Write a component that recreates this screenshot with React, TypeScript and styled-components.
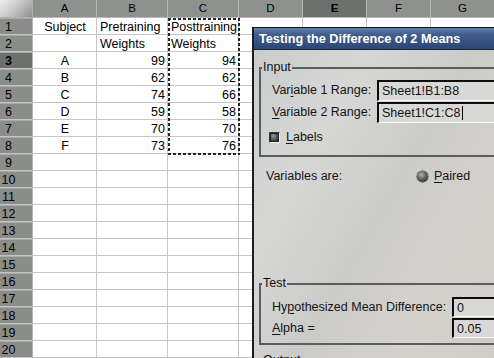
import React from 'react';
import styled, { createGlobalStyle } from 'styled-components';

const Global = createGlobalStyle`
  html, body { margin: 0; padding: 0; background: #fff; }
  body { font-family: "Liberation Sans", Arial, sans-serif; }
`;

const Page = styled.div`
  position: relative;
  width: 494px;
  height: 358px;
  overflow: hidden;
  background: #fff;
  font-family: "Liberation Sans", Arial, sans-serif;
  color: #000;
`;

const Sheet = styled.div`
  display: grid;
  grid-template-columns: 33px 64px 71px 71px 64px 64px 64px 64px;
  grid-template-rows: 18px repeat(20, 17px);
`;

const Corner = styled.div`
  grid-row: 1;
  grid-column: 1;
  background: linear-gradient(135deg, #efefef 0%, #cfcfcf 40%, #8f8f8f 100%);
  border-right: 1px solid #b0b0b0;
  border-bottom: 1px solid #b0b0b0;
`;

const ColHead = styled.div<{ $c: number; $active?: boolean }>`
  grid-row: 1;
  grid-column: ${p => p.$c};
  display: flex;
  align-items: center;
  justify-content: center;
  box-sizing: border-box;
  padding-bottom: 1px;
  background: ${p => (p.$active ? '#6e706e' : '#8f918f')};
  border-right: 1px solid #b8b8b8;
  border-bottom: 1px solid #b8b8b8;
  font-size: 11.5px;
  font-weight: ${p => (p.$active ? 700 : 400)};
`;

const RowHead = styled.div<{ $r: number; $active?: boolean }>`
  grid-row: ${p => p.$r};
  grid-column: 1;
  display: flex;
  align-items: center;
  justify-content: center;
  box-sizing: border-box;
  padding-right: 15px;
  padding-top: 1px;
  background: ${p => (p.$active ? '#6e706e' : '#8b8d8b')};
  border-right: 1px solid #b4b4b4;
  border-bottom: 1px solid #c4c4c4;
  box-shadow: inset 0 1px 0 #a9aba9;
  font-size: 12.5px;
  font-weight: ${p => (p.$active ? 700 : 400)};
`;

const Cell = styled.div<{ $r: number; $c: number; $align: 'left' | 'center' | 'right' }>`
  grid-row: ${p => p.$r};
  grid-column: ${p => p.$c};
  display: flex;
  align-items: center;
  justify-content: ${p => (p.$align === 'left' ? 'flex-start' : p.$align === 'right' ? 'flex-end' : 'center')};
  box-sizing: border-box;
  padding: 1px 2px 0 3px;
  border-right: 1px solid #c6c6c6;
  border-bottom: 1px solid #c6c6c6;
  font-size: 12.5px;
  white-space: nowrap;
  overflow: hidden;
`;

const CopyMarquee = styled.div`
  grid-row: 2 / 10;
  grid-column: 4;
  margin: 0 -1px -1px 0;
  pointer-events: none;
  z-index: 1;
  background:
    repeating-linear-gradient(90deg, #262626 0 3px, transparent 3px 5px) top left / 100% 2px no-repeat,
    repeating-linear-gradient(90deg, #262626 0 3px, transparent 3px 5px) bottom left / 100% 2px no-repeat,
    repeating-linear-gradient(180deg, #262626 0 3px, transparent 3px 5px) top left / 2px 100% no-repeat,
    repeating-linear-gradient(180deg, #262626 0 3px, transparent 3px 5px) top right / 2px 100% no-repeat;
`;

/* Dialog */

const Dialog = styled.div`
  position: absolute;
  left: 252px;
  top: 27px;
  width: 330px;
  height: 360px;
  box-sizing: border-box;
  border-top: 1px solid #141414;
  border-left: 2px solid #1c1c1c;
  display: flex;
  flex-direction: column;
  z-index: 2;
`;

const TitleBar = styled.div`
  height: 21px;
  flex: none;
  display: flex;
  align-items: center;
  padding-left: 5px;
  background: linear-gradient(180deg, #6281ad 0%, #415e8e 30%, #34507f 70%, #2d4775 100%);
  border-bottom: 1px solid #17233a;
  color: #fff;
  font-size: 12.7px;
  font-weight: 700;
  white-space: nowrap;
`;

const Body = styled.div`
  flex: 1;
  padding: 0 0 0 5px;
  background: linear-gradient(120deg, #c9cccd 0%, #d7d7d5 22%, #cbcbc9 42%, #d5d2ce 62%, #cac7c3 100%);
  font-size: 12.5px;
  color: #141414;
`;

const Frame = styled.fieldset<{ $mt: number; $pt: number; $pb: number }>`
  margin: ${p => p.$mt}px 0 0 0;
  padding: ${p => p.$pt}px 0 ${p => p.$pb}px 0;
  border: 2px solid #585d5d;
  min-width: 0;
`;

const Legend = styled.legend`
  padding: 0 1px;
  margin-left: 1px;
  font-size: 12.5px;
  line-height: 15px;
  color: #111;
`;

const FieldRow = styled.div<{ $label: number; $h: number }>`
  display: grid;
  grid-template-columns: ${p => p.$label}px 1fr;
  align-items: center;
  height: ${p => p.$h}px;
  padding-left: 11px;
  & + & {
    margin-top: 1px;
  }
`;

const Label = styled.span`
  white-space: nowrap;
  line-height: 15px;
`;

const Mn = styled.span`
  text-decoration: underline;
  text-underline-offset: 2px;
  text-decoration-thickness: 1px;
`;

const Field = styled.div`
  height: 100%;
  box-sizing: border-box;
  display: flex;
  align-items: center;
  padding-left: 3px;
  background: #d8d8d6;
  border-top: 2px solid #0c0c0c;
  border-left: 2px solid #0c0c0c;
  border-bottom: 1px solid #fafafa;
  white-space: nowrap;
`;

const Caret = styled.span`
  display: inline-block;
  width: 1px;
  height: 14px;
  margin-left: 1px;
  background: #000;
`;

const CheckRow = styled.div`
  display: flex;
  align-items: center;
  gap: 6px;
  height: 17px;
  margin-top: 6px;
  padding-left: 8px;
`;

const CheckBox = styled.span`
  width: 11px;
  height: 11px;
  box-sizing: border-box;
  border-top: 1px solid #3a3a3a;
  border-left: 1px solid #3a3a3a;
  border-bottom: 1px solid #f4f4f4;
  border-right: 1px solid #f4f4f4;
  background: radial-gradient(circle at 35% 35%, #9a9a9a 0%, #4a4a4a 50%, #1e1e1e 100%);
  box-shadow: inset 0 0 0 1px #222;
`;

const VarRow = styled.div`
  display: grid;
  grid-template-columns: 151px auto;
  align-items: center;
  height: 16px;
  margin-top: 11px;
  padding-left: 7px;
`;

const RadioOption = styled.div`
  display: flex;
  align-items: center;
  gap: 6px;
`;

const RadioDot = styled.span`
  width: 11px;
  height: 11px;
  border-radius: 50%;
  background: radial-gradient(circle at 40% 35%, #b4b4b4 0%, #6a6a6a 40%, #2c2c2c 85%);
  box-shadow: 0 0 0 0.5px #333;
`;

const sheetData: { row: number; cells: [string, string, string] }[] = [
  { row: 1, cells: ['Subject', 'Pretraining', 'Posttraining'] },
  { row: 2, cells: ['', 'Weights', 'Weights'] },
  { row: 3, cells: ['A', '99', '94'] },
  { row: 4, cells: ['B', '62', '62'] },
  { row: 5, cells: ['C', '74', '66'] },
  { row: 6, cells: ['D', '59', '58'] },
  { row: 7, cells: ['E', '70', '70'] },
  { row: 8, cells: ['F', '73', '76'] },
];

const cols = ['A', 'B', 'C', 'D', 'E', 'F', 'G'];

export default function App() {
  const rows = Array.from({ length: 20 }, (_, i) => i + 1);
  return (
    <Page>
      <Global />
      <Sheet>
        <Corner />
        {cols.map((c, i) => (
          <ColHead key={c} $c={i + 2} $active={c === 'E'}>
            {c}
          </ColHead>
        ))}
        {rows.map(r => (
          <React.Fragment key={r}>
            <RowHead $r={r + 1} $active={r === 3}>
              {r}
            </RowHead>
            {cols.map((c, ci) => {
              const d = sheetData.find(x => x.row === r);
              let text = '';
              let align: 'left' | 'center' | 'right' = 'left';
              if (d && ci < 3) {
                text = d.cells[ci];
                if (ci === 0) align = 'center';
                else align = r <= 2 ? 'left' : 'right';
              }
              return (
                <Cell key={c} $r={r + 1} $c={ci + 2} $align={align}>
                  {text}
                </Cell>
              );
            })}
          </React.Fragment>
        ))}
        <CopyMarquee />
      </Sheet>

      <Dialog>
        <TitleBar>Testing the Difference of 2 Means</TitleBar>
        <Body>
          <Frame $mt={10} $pt={5} $pb={9}>
            <Legend>Input</Legend>
            <FieldRow $label={105} $h={21}>
              <Label>
                Var<Mn>i</Mn>able 1 Range:
              </Label>
              <Field>Sheet1!B1:B8</Field>
            </FieldRow>
            <FieldRow $label={105} $h={21}>
              <Label>
                <Mn>V</Mn>ariable 2 Range:
              </Label>
              <Field>
                Sheet1!C1:C8
                <Caret />
              </Field>
            </FieldRow>
            <CheckRow>
              <CheckBox />
              <Label>
                <Mn>L</Mn>abels
              </Label>
            </CheckRow>
          </Frame>

          <VarRow>
            <Label>Variables are:</Label>
            <RadioOption>
              <RadioDot />
              <Label>
                <Mn>P</Mn>aired
              </Label>
            </RadioOption>
          </VarRow>

          <Frame $mt={92} $pt={6} $pb={5}>
            <Legend>Test</Legend>
            <FieldRow $label={180} $h={20}>
              <Label>
                Hy<Mn>p</Mn>othesized Mean Difference:
              </Label>
              <Field>0</Field>
            </FieldRow>
            <FieldRow $label={180} $h={20}>
              <Label>
                <Mn>A</Mn>lpha =
              </Label>
              <Field>0.05</Field>
            </FieldRow>
          </Frame>

          <Frame $mt={8} $pt={6} $pb={5}>
            <Legend>Output</Legend>
          </Frame>
        </Body>
      </Dialog>
    </Page>
  );
}
